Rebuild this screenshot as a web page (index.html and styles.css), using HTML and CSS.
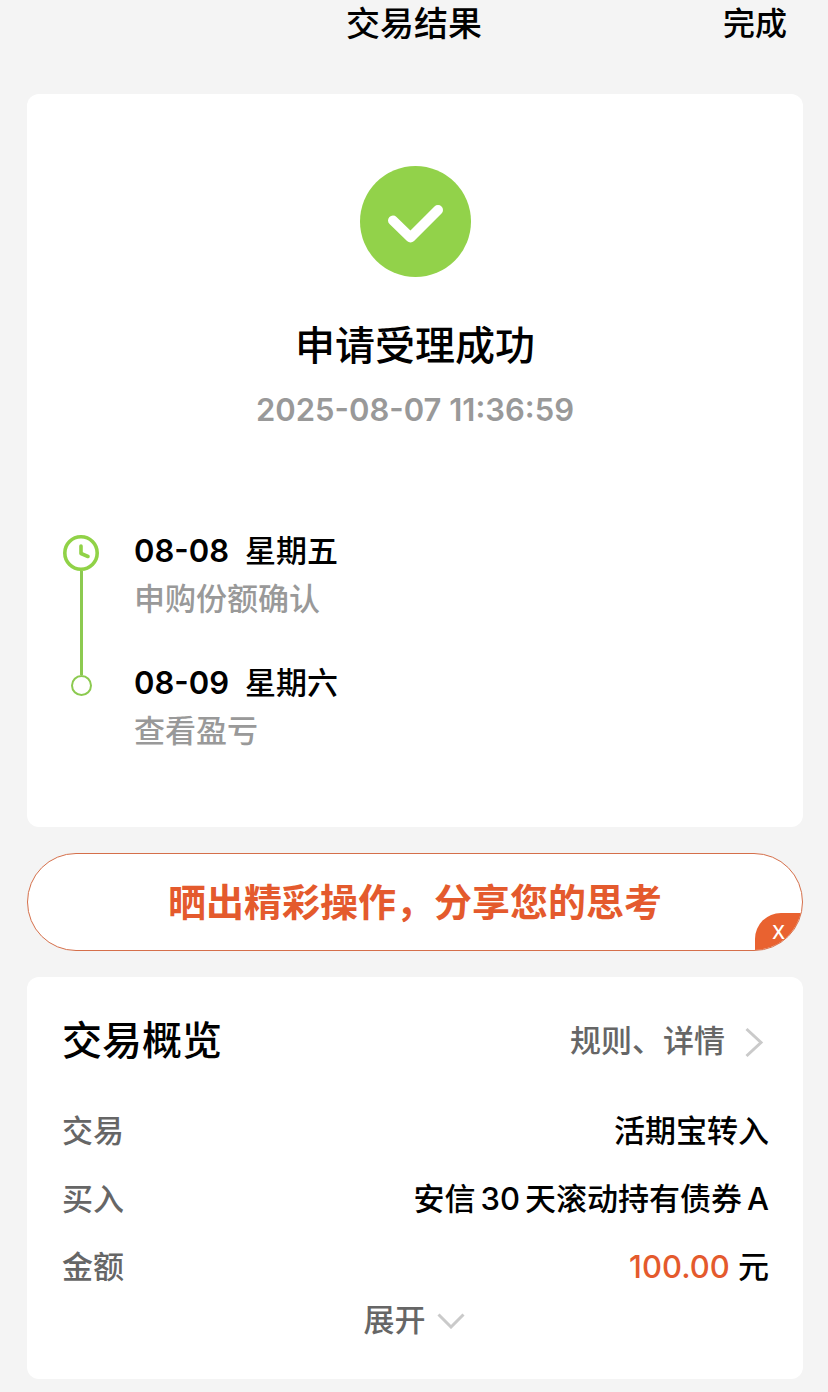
FILE: index.html
```html
<!DOCTYPE html>
<html lang="zh-CN">
<head>
    <meta charset="UTF-8">
    <meta name="viewport" content="width=device-width, initial-scale=1.0">
    <title>交易结果</title>
    <link rel="stylesheet" href="styles.css">
</head>
<body>

<header class="topbar">
    <h1>交易结果</h1>
    <button type="button" class="done">完成</button>
</header>

<main class="content">
    <section class="card result">
        <svg class="success-icon" viewBox="0 0 111 111" aria-hidden="true">
            <circle cx="55.5" cy="55.5" r="55.5" fill="#92d24a"/>
            <path d="M33 54.5 L50.5 71.5 L78 44" fill="none" stroke="#fff" stroke-width="10" stroke-linecap="round" stroke-linejoin="round"/>
        </svg>
        <h2>申请受理成功</h2>
        <time class="result-time">2025-08-07 11:36:59</time>

        <ol class="timeline">
            <li>
                <div class="marker">
                    <svg class="clock" viewBox="0 0 36 36" aria-hidden="true">
                        <circle cx="18" cy="18" r="16.2" fill="none" stroke="#90d247" stroke-width="3.6"/>
                        <path d="M18 11 V18.5 L25 21.5" fill="none" stroke="#90d247" stroke-width="3.6" stroke-linecap="round" stroke-linejoin="round"/>
                    </svg>
                    <span class="line"></span>
                </div>
                <div class="step">
                    <p class="step-date"><span class="day">08-08</span><span>星期五</span></p>
                    <p class="step-text">申购份额确认</p>
                </div>
            </li>
            <li>
                <div class="marker">
                    <span class="line-end"></span>
                    <span class="dot"></span>
                </div>
                <div class="step">
                    <p class="step-date"><span class="day">08-09</span><span>星期六</span></p>
                    <p class="step-text">查看盈亏</p>
                </div>
            </li>
        </ol>
    </section>

    <div class="banner">
        <a href="#" class="banner-link">晒出精彩操作，分享您的思考</a>
        <button type="button" class="banner-close" aria-label="关闭">X</button>
    </div>

    <section class="card overview">
        <div class="overview-head">
            <h2>交易概览</h2>
            <a href="#" class="more">
                规则、详情
                <svg class="arrow-right" viewBox="0 0 18 30" aria-hidden="true">
                    <path d="M1.5 3 L16 16.5 L1.5 30" fill="none" stroke="#cacaca" stroke-width="3"/>
                </svg>
            </a>
        </div>
        <dl class="rows">
            <div class="row">
                <dt>交易</dt>
                <dd>活期宝转入</dd>
            </div>
            <div class="row">
                <dt>买入</dt>
                <dd>安信<span class="num">30</span>天滚动持有债券<span class="letter">A</span></dd>
            </div>
            <div class="row">
                <dt>金额</dt>
                <dd><span class="amount">100.00</span> 元</dd>
            </div>
        </dl>
        <button type="button" class="expand">
            展开
            <svg class="arrow-down" viewBox="0 0 28 18" aria-hidden="true">
                <path d="M1.5 3.5 L14 16 L26.5 3.5" fill="none" stroke="#cacaca" stroke-width="3"/>
            </svg>
        </button>
    </section>
</main>

</body>
</html>
```
FILE: styles.css
```css
* {
    margin: 0;
    padding: 0;
    box-sizing: border-box;
}

body {
    background: #f4f4f4;
    color: #000;
    font-family: Inter, "Noto Sans CJK SC", sans-serif;
    font-size: 31px;
    font-weight: 500;
    line-height: 48px;
}

button {
    border: none;
    background: none;
    color: inherit;
    font: inherit;
    cursor: pointer;
}

a {
    color: inherit;
    text-decoration: none;
}

h1, h2 {
    font-weight: 500;
}

.topbar {
    display: grid;
    grid-template-columns: 1fr auto 1fr;
    height: 94px;
    padding: 0 41px;
}

.topbar h1 {
    grid-column: 2;
    font-size: 34px;
}

.done {
    justify-self: end;
    align-self: start;
    font-size: 32px;
}

.content {
    display: flex;
    flex-direction: column;
    gap: 26px;
    padding: 0 25px 13px 27px;
}

.card {
    background: #fff;
    border-radius: 12px;
}

.card h2 {
    font-size: 40px;
    line-height: 56px;
}

/* Resultado */
.result {
    display: flex;
    flex-direction: column;
    align-items: center;
    padding: 72px 35px;
}

.success-icon {
    width: 111px;
    height: 111px;
    margin-bottom: 41px;
}

.result-time, .day {
    font-weight: 600;
}

.result-time {
    margin-top: 12px;
    color: #999;
}

.timeline {
    align-self: stretch;
    margin-top: 93px;
    list-style: none;
}

.timeline li {
    display: flex;
    gap: 34px;
}

.timeline li:first-child .step {
    padding-bottom: 36px;
}

.marker {
    display: flex;
    flex-direction: column;
    align-items: center;
    width: 38px;
}

.clock {
    width: 36px;
    height: 36px;
    margin-top: 8px;
}

.line, .line-end {
    width: 3px;
    background: #8cca50;
}

.line {
    flex: 1;
}

.line-end {
    height: 16px;
}

.dot {
    width: 21px;
    height: 21px;
    border: 2px solid #8cca50;
    border-radius: 50%;
}

.step-date {
    display: flex;
    gap: 16px;
}

.step-text {
    color: #999;
}

/* Banner */
.banner {
    position: relative;
    overflow: hidden;
    border: 1px solid #d56f4a;
    border-radius: 49px;
    background: #fff;
}

.banner-link {
    display: block;
    padding: 24px 0;
    color: #e45a2d;
    font-size: 38px;
    font-weight: 700;
    text-align: center;
}

.banner-close {
    position: absolute;
    right: 0;
    bottom: 0;
    width: 47px;
    height: 37px;
    border-radius: 26px 0 0 0;
    background: #e96230;
    color: #fff;
    font-family: "Noto Sans", sans-serif;
    font-size: 20px;
    line-height: 37px;
}

/* Resumen */
.overview {
    display: flex;
    flex-direction: column;
    padding: 36px 34px 40px 35px;
}

.overview-head {
    display: flex;
    justify-content: space-between;
    align-items: center;
}

.more {
    display: flex;
    align-items: center;
    gap: 20px;
    padding-right: 6px;
    color: #666;
}

.arrow-right {
    width: 18px;
    height: 30px;
    overflow: visible;
}

.rows {
    margin-top: 28px;
}

.row {
    display: flex;
    justify-content: space-between;
    align-items: center;
    height: 68px;
}

.row dt {
    color: #666;
}

.num {
    margin: 0 5px;
}

.letter {
    margin-left: 5px;
}

.amount {
    color: #e45a2d;
}

.expand {
    display: flex;
    align-items: center;
    align-self: center;
    gap: 11px;
    height: 38px;
    padding-right: 3px;
    color: #666;
}

.arrow-down {
    width: 28px;
    height: 18px;
}
```
